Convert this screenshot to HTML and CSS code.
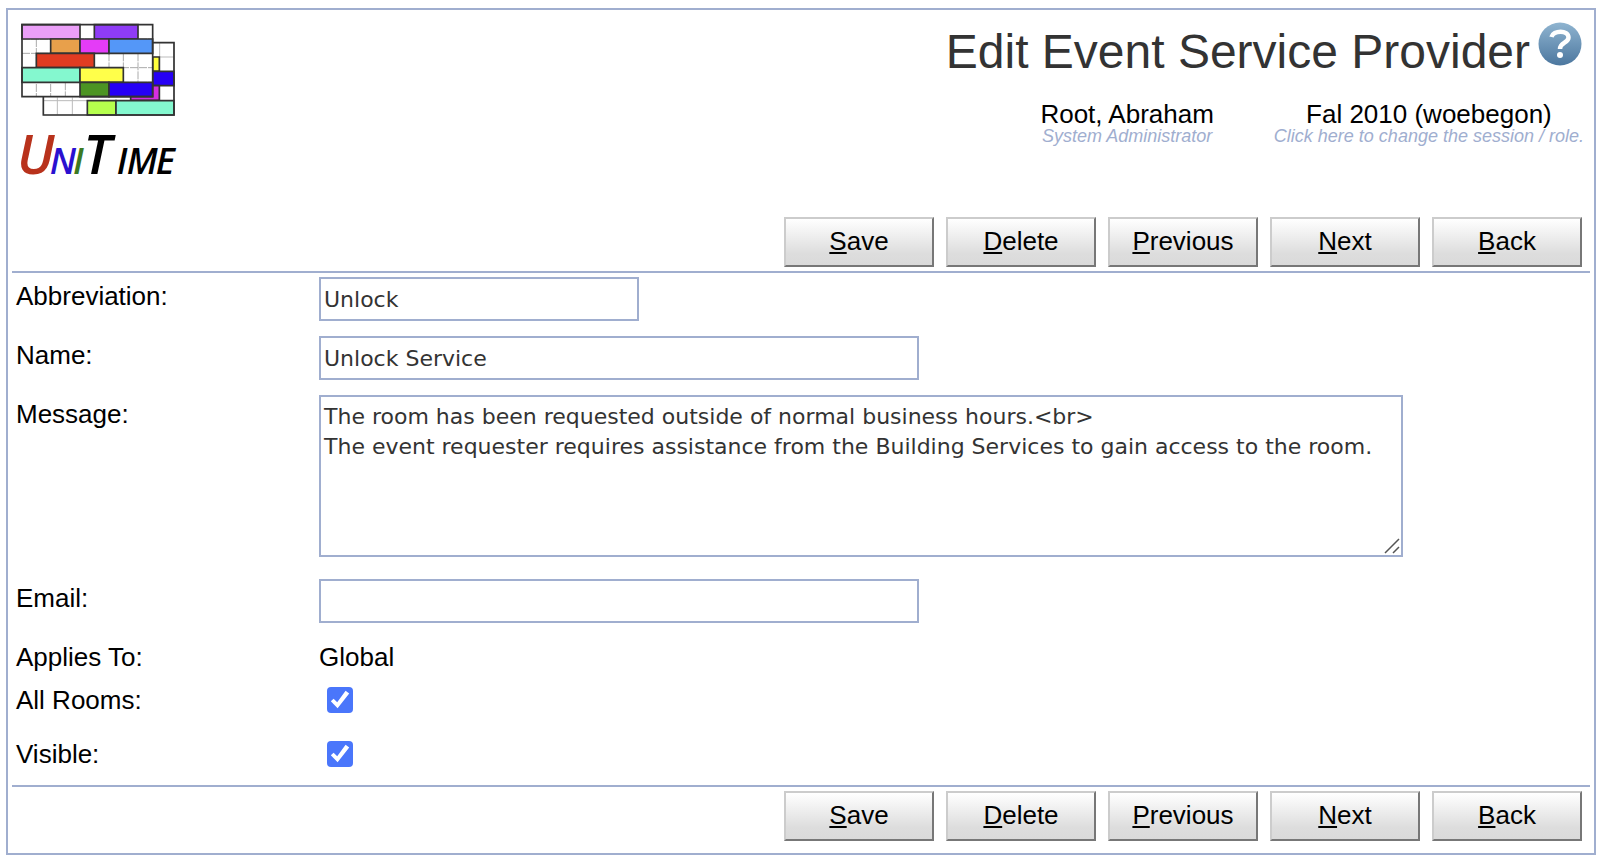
FILE: index.html
```html
<!DOCTYPE html>
<html lang="en">
<head>
<meta charset="utf-8">
<title>Edit Event Service Provider</title>
<link rel="stylesheet" href="styles.css">
</head>
<body>
<main class="panel">
  <header class="header">
    <svg class="logo" viewBox="60 66 468 468" role="img" aria-label="UniTime">
      <g stroke="#bbb" stroke-width="3" fill="#fff">
        <path d="M130 128H522V345H130Z"/>
        <path d="M479 128V345M460 171H522M172 292V345M217 292V345M130 302H522" fill="none"/>
      </g>
      <g stroke="#333" stroke-width="5">
        <path d="M458 171H478V214H458Z" fill="#ffff3c"/>
        <path d="M458 214H522V257H458Z" fill="#2600f5"/>
        <path d="M392 257H478V301H392Z" fill="#d62ee0"/>
        <path d="M262 302H348V345H262Z" fill="#b6ff4d"/>
        <path d="M348 302H522V345H348Z" fill="#84f8cf"/>
        <path d="M130 128H522V345H130Z" fill="none"/>
      </g>
      <path d="M66 74H458V290H66Z" fill="#fff"/>
      <path d="M66 160H458M66 117H458M66 203H458M66 247H458M109 117V290M152 117V290M196 247V290M327 160V203M370 160V247M414 160V247" fill="none" stroke="#aaa" stroke-width="3" stroke-dasharray="24 3"/>
      <g stroke="#333" stroke-width="5">
        <path d="M66 74H240V117H66Z" fill="#eb9ff8"/>
        <path d="M283 74H414V117H283Z" fill="#8f3cf6"/>
        <path d="M152 117H240V160H152Z" fill="#e8a04b"/>
        <path d="M240 117H327V160H240Z" fill="#e43cf7"/>
        <path d="M327 117H458V160H327Z" fill="#5497f8"/>
        <path d="M109 160H283V203H109Z" fill="#e03c22"/>
        <path d="M66 203H240V247H66Z" fill="#84f8cf"/>
        <path d="M240 203H370V247H240Z" fill="#ffff4a"/>
        <path d="M240 247H327V290H240Z" fill="#4c9423"/>
        <path d="M327 247H458V290H327Z" fill="#2600f5"/>
        <path d="M66 74H458V290H66Z" fill="none"/>
      </g>
      <text class="wordmark" y="521"><tspan class="wm-big wm-red" x="51">U</tspan><tspan class="wm-small wm-blue" x="149">N</tspan><tspan class="wm-small wm-green" x="219">I</tspan><tspan class="wm-big" x="250">T</tspan><tspan class="wm-small" x="350">I</tspan><tspan class="wm-small" x="380">M</tspan><tspan class="wm-small" x="467">E</tspan></text>
    </svg>
    <div class="heading">
      <div class="title-row">
        <h1 class="title">Edit Event Service Provider</h1>
        <a class="help" href="#help" aria-label="Help">
          <svg class="help-icon" viewBox="0 0 44 44" aria-hidden="true">
            <defs><linearGradient id="help-fill" x1="0" y1="0" x2="0" y2="1"><stop offset="0" stop-color="#8fb4d0"/><stop offset="1" stop-color="#4c779f"/></linearGradient></defs>
            <circle cx="22" cy="22" r="21.5" fill="url(#help-fill)"/>
            <path d="M13.500 15C15 8 30.500 7.500 30.500 15.500C30.500 21 22 20.500 22 27" fill="none" stroke="#fff" stroke-width="4.500"/>
            <circle cx="22" cy="33" r="3" fill="#fff"/>
          </svg>
        </a>
      </div>
      <div class="session-row">
        <a class="info" href="#user"><span class="info-name">Root, Abraham</span><span class="info-note">System Administrator</span></a>
        <a class="info" href="#session"><span class="info-name">Fal 2010 (woebegon)</span><span class="info-note">Click here to change the session / role.</span></a>
      </div>
    </div>
  </header>

  <form class="form">
    <div class="buttons">
      <button class="button" type="button"><u>S</u>ave</button>
      <button class="button" type="button"><u>D</u>elete</button>
      <button class="button" type="button"><u>P</u>revious</button>
      <button class="button" type="button"><u>N</u>ext</button>
      <button class="button" type="button"><u>B</u>ack</button>
    </div>
    <div class="fields">
      <div class="row">
        <label class="label" for="abbreviation">Abbreviation:</label>
        <input class="text text-short" id="abbreviation" type="text" value="Unlock">
      </div>
      <div class="row">
        <label class="label" for="name">Name:</label>
        <input class="text" id="name" type="text" value="Unlock Service">
      </div>
      <div class="row row-message">
        <label class="label" for="message">Message:</label>
        <div class="message-box">
          <textarea class="text message" id="message">The room has been requested outside of normal business hours.&lt;br&gt;
The event requester requires assistance from the Building Services to gain access to the room.</textarea>
          <svg class="grip" viewBox="0 0 16 16" aria-hidden="true"><path d="M1 15L15 1M9 15L15 9" stroke="#555" stroke-width="1.500"/></svg>
        </div>
      </div>
      <div class="row">
        <label class="label" for="email">Email:</label>
        <input class="text" id="email" type="email">
      </div>
      <div class="row row-plain">
        <span class="label">Applies To:</span>
        <span class="value">Global</span>
      </div>
      <div class="row row-check">
        <label class="label" for="all-rooms">All Rooms:</label>
        <input class="check" id="all-rooms" type="checkbox" checked>
      </div>
      <div class="row row-check">
        <label class="label" for="visible">Visible:</label>
        <input class="check" id="visible" type="checkbox" checked>
      </div>
    </div>
    <div class="buttons">
      <button class="button" type="button"><u>S</u>ave</button>
      <button class="button" type="button"><u>D</u>elete</button>
      <button class="button" type="button"><u>P</u>revious</button>
      <button class="button" type="button"><u>N</u>ext</button>
      <button class="button" type="button"><u>B</u>ack</button>
    </div>
  </form>
</main>
</body>
</html>
```

FILE: styles.css
```css
* {
  box-sizing: border-box;
}

body {
  margin: 8px 8px 6px 6px;
  background: #fff;
  color: #000;
  font-family: "Liberation Sans", Arial, sans-serif;
  font-size: 26px;
  line-height: 30px;
}

.panel {
  border: 2px solid #a0aecf;
  padding: 12px 4px;
}

.header {
  display: flex;
  justify-content: space-between;
  align-items: flex-start;
  min-height: 195px;
  padding: 0 6px 0 8px;
}

.logo {
  flex: none;
  width: 156px;
  height: 156px;
  overflow: visible;
}

.wordmark {
  font-family: "Open Sans", sans-serif;
  font-style: italic;
  font-weight: 600;
}

.wm-big {
  font-size: 164px;
}

.wm-small {
  font-size: 108px;
}

.wm-red {
  fill: #b8321c;
}

.wm-blue {
  fill: #2a10d0;
}

.wm-green {
  fill: #3c7a22;
}

.title-row {
  display: flex;
  justify-content: flex-end;
  gap: 8px;
  padding-right: 2px;
}

.title {
  margin: 0;
  color: #333;
  font-size: 48px;
  font-weight: 400;
  line-height: 60px;
}

.help {
  height: 44px;
}

.help-icon {
  display: block;
  width: 44px;
  height: 44px;
}

.session-row {
  display: flex;
  justify-content: flex-end;
  gap: 60px;
  margin-top: 19px;
}

.info {
  display: flex;
  flex-direction: column;
  align-items: center;
  color: #000;
  text-decoration: none;
}

.info-name {
  line-height: 26px;
}

.info-note {
  color: #a0aecf;
  font-size: 18px;
  font-style: italic;
  line-height: 18px;
}

.buttons {
  display: flex;
  justify-content: flex-end;
  gap: 12px;
  padding: 0 8px 4px;
}

.fields + .buttons {
  padding: 4px 8px 0;
}

.button {
  width: 150px;
  height: 50px;
  padding: 0 0 2px;
  border: 2px solid;
  border-color: #ccc #777 #777 #ccc;
  background: linear-gradient(#fff, #ddd 75%, #dadada);
  color: #000;
  font: inherit;
}

.button u {
  text-decoration-thickness: 2px;
  text-underline-offset: 2px;
  text-decoration-skip-ink: none;
}

.fields {
  border-top: 2px solid #a0aecf;
  border-bottom: 2px solid #a0aecf;
  padding: 4px 4px 0;
}

.row {
  display: grid;
  grid-template-columns: 303px minmax(0, 1fr);
  align-items: start;
  padding-bottom: 15px;
}

.row-message {
  padding-bottom: 22px;
}

.row-plain {
  padding-bottom: 10px;
}

.row-check {
  padding-bottom: 21px;
}

.row-check:last-child {
  padding-bottom: 16px;
}

.label,
.value {
  padding-top: 4px;
}

.row-check .label {
  padding-top: 3px;
}

.text {
  display: block;
  width: 600px;
  max-width: 100%;
  height: 44px;
  margin: 0;
  padding: 0 3px;
  border: 2px solid #a0aecf;
  border-radius: 0;
  background: #fff;
  color: #333;
  font-family: Verdana, "DejaVu Sans", sans-serif;
  font-size: 22px;
  line-height: 30px;
}

.text-short {
  width: 320px;
}

.message-box {
  position: relative;
  width: 1084px;
  max-width: 100%;
}

.message {
  width: 100%;
  height: 162px;
  padding-top: 5px;
  overflow: auto;
  resize: none;
}

.grip {
  position: absolute;
  right: 3px;
  bottom: 3px;
  width: 16px;
  height: 16px;
  pointer-events: none;
}

.check {
  display: grid;
  place-items: center;
  width: 26px;
  height: 26px;
  margin: 5px 8px 2px;
  border-radius: 4px;
  appearance: none;
  border: 2px solid #767676;
}

.check:checked {
  border: 0;
  background: #4a76fb;
}

.check:checked::after {
  content: "";
  width: 20px;
  height: 20px;
  background: #fff;
  clip-path: polygon(4% 56%, 18% 44%, 36% 61%, 78% 4%, 96% 17%, 38% 91%);
}
```
